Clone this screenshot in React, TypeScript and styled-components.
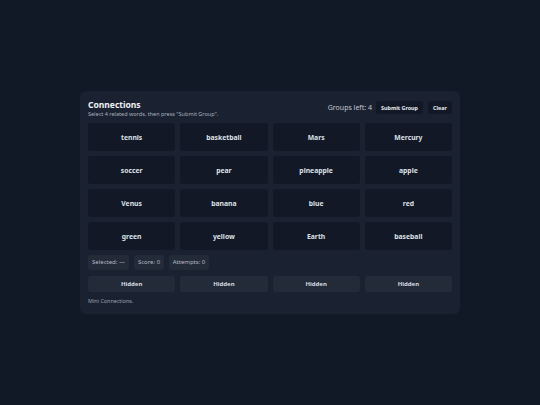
import React from "react";
import styled, { createGlobalStyle } from "styled-components";

const Global = createGlobalStyle`
  html, body { margin: 0; padding: 0; background: #121926; }
  body { font-family: "Noto Sans", "Open Sans", sans-serif; }
  #root { width: 540px; height: 405px; display: flex; align-items: center; justify-content: center; }
`;

const Card = styled.div`
  width: 380px;
  height: 223px;
  box-sizing: border-box;
  padding: 8px;
  background: #1a2130;
  border-radius: 6px;
  display: flex;
  flex-direction: column;
`;

const Header = styled.div`
  height: 19px;
  display: flex;
  justify-content: space-between;
  align-items: center;
  margin-bottom: 5px;
`;

const TitleBlock = styled.div`
  display: flex;
  flex-direction: column;
  align-self: flex-start;
`;

const Title = styled.div`
  font-size: 8.5px;
  font-weight: 700;
  line-height: 10px;
  padding-top: 1px;
  color: #f1f3f6;
`;

const Subtitle = styled.div`
  font-size: 5.5px;
  line-height: 8px;
  color: #a9b0bc;
`;

const Controls = styled.div`
  display: flex;
  align-items: center;
  gap: 5px;
  margin-top: -2px;
`;

const GroupsLeft = styled.span`
  font-size: 7px;
  color: #c3c8d1;
  margin-right: -1px;
`;

const Btn = styled.button<{ $w: number }>`
  width: ${(p) => p.$w}px;
  height: 13px;
  padding: 0;
  border: none;
  border-radius: 3px;
  background: #121826;
  color: #e9ecf1;
  font-family: inherit;
  font-size: 5.4px;
  font-weight: 700;
`;

const Grid = styled.div`
  display: grid;
  grid-template-columns: repeat(4, 1fr);
  grid-auto-rows: 28px;
  gap: 5px;
`;

const Tile = styled.div`
  background: #121826;
  border-radius: 3px;
  display: flex;
  align-items: center;
  justify-content: center;
  font-size: 6.8px;
  font-weight: 700;
  color: #dde1e8;
`;

const Stats = styled.div`
  display: flex;
  gap: 5px;
  margin-top: 5px;
  height: 14.5px;
`;

const Pill = styled.div<{ $w: number }>`
  width: ${(p) => p.$w}px;
  background: #232a38;
  border-radius: 3px;
  display: flex;
  align-items: center;
  justify-content: center;
  font-size: 6px;
  color: #b4bac5;
`;

const HiddenRow = styled.div`
  display: grid;
  grid-template-columns: repeat(4, 1fr);
  gap: 5px;
  height: 16.5px;
  margin-top: 6px;
`;

const HiddenBox = styled.div`
  background: #232a38;
  border-radius: 3px;
  display: flex;
  align-items: center;
  justify-content: center;
  font-size: 6px;
  font-weight: 700;
  color: #d7dbe2;
`;

const Footer = styled.div`
  margin-top: 5px;
  font-size: 5.4px;
  line-height: 9px;
  color: #9aa1ad;
`;

const words = [
  "tennis", "basketball", "Mars", "Mercury",
  "soccer", "pear", "pineapple", "apple",
  "Venus", "banana", "blue", "red",
  "green", "yellow", "Earth", "baseball",
];

export default function App() {
  return (
    <>
      <Global />
      <Card>
        <Header>
          <TitleBlock>
            <Title>Connections</Title>
            <Subtitle>Select 4 related words, then press "Submit Group".</Subtitle>
          </TitleBlock>
          <Controls>
            <GroupsLeft>Groups left: 4</GroupsLeft>
            <Btn $w={47}>Submit Group</Btn>
            <Btn $w={24}>Clear</Btn>
          </Controls>
        </Header>
        <Grid>
          {words.map((w) => (
            <Tile key={w}>{w}</Tile>
          ))}
        </Grid>
        <Stats>
          <Pill $w={41}>Selected: —</Pill>
          <Pill $w={30}>Score: 0</Pill>
          <Pill $w={40}>Attempts: 0</Pill>
        </Stats>
        <HiddenRow>
          {[0, 1, 2, 3].map((i) => (
            <HiddenBox key={i}>Hidden</HiddenBox>
          ))}
        </HiddenRow>
        <Footer>Mini Connections.</Footer>
      </Card>
    </>
  );
}
